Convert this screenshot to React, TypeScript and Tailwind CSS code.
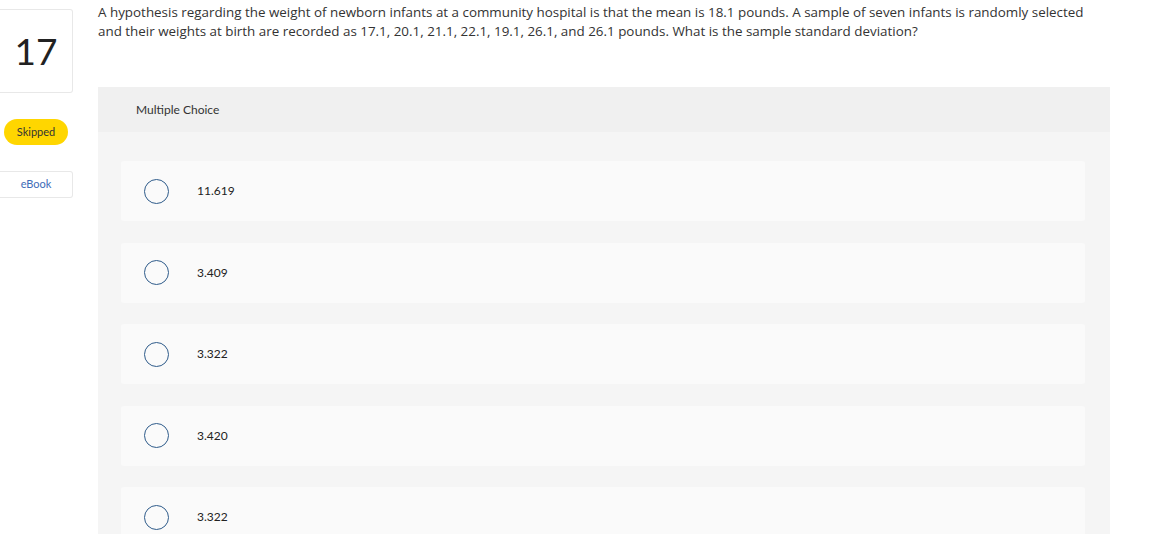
import React from "react";

const options = ["11.619", "3.409", "3.322", "3.420", "3.322"];

export default function App() {
  return (
    <div className="w-[1164px] h-[534px] overflow-hidden bg-white flex items-start text-[#333]" style={{ fontFamily: "Lato, 'Open Sans', sans-serif" }}>
      <div className="w-[73px] shrink-0 flex flex-col items-stretch pt-[9px]">
        <div className="h-[84px] border border-[#e8e8e8] rounded-[3px] flex items-center justify-center text-[37px] text-[#222] border-l-0 rounded-l-none">17</div>
        <div className="mt-[26px] ml-[4px] w-[64px] h-[26px] rounded-full bg-[#ffd600] flex items-center justify-center text-[11px] text-[#333]">Skipped</div>
        <div className="mt-[26px] h-[27px] border border-[#e8e8e8] border-l-0 rounded-r-[3px] flex items-center justify-center text-[11px] text-[#3d6cb8]">eBook</div>
      </div>
      <div className="ml-[25px] w-[1012px] shrink-0 flex flex-col">
        <p className="shrink-0 pt-[3px] w-[992px] text-[13.4px] leading-[19px] text-[#333] font-['Open_Sans',sans-serif]">
          A hypothesis regarding the weight of newborn infants at a community hospital is that the mean is 18.1 pounds. A sample of seven infants is randomly selected and their weights at birth are recorded as 17.1, 20.1, 21.1, 22.1, 19.1, 26.1, and 26.1 pounds. What is the sample standard deviation?
        </p>
        <div className="shrink-0 mt-[46px] flex flex-col rounded-t-[2px]">
          <div className="shrink-0 h-[45px] bg-[#f0f0f0] flex items-center pl-[38px] text-[12px] text-[#333]">Multiple Choice</div>
          <div className="shrink-0 bg-[#f5f5f5] pt-[29px] pb-[20px] pl-[23px] pr-[25px] flex flex-col gap-[21.5px]">
            {options.map((o, i) => (
              <div key={i} className="shrink-0 h-[60px] bg-[#fafafa] rounded-[3px] flex items-center pl-[23px]">
                <div className="w-[25px] h-[25px] rounded-full border-[1.5px] border-[#2e5b8a] shrink-0" />
                <span className="ml-[28px] text-[12px] text-[#222]">{o}</span>
              </div>
            ))}
          </div>
        </div>
      </div>
    </div>
  );
}
